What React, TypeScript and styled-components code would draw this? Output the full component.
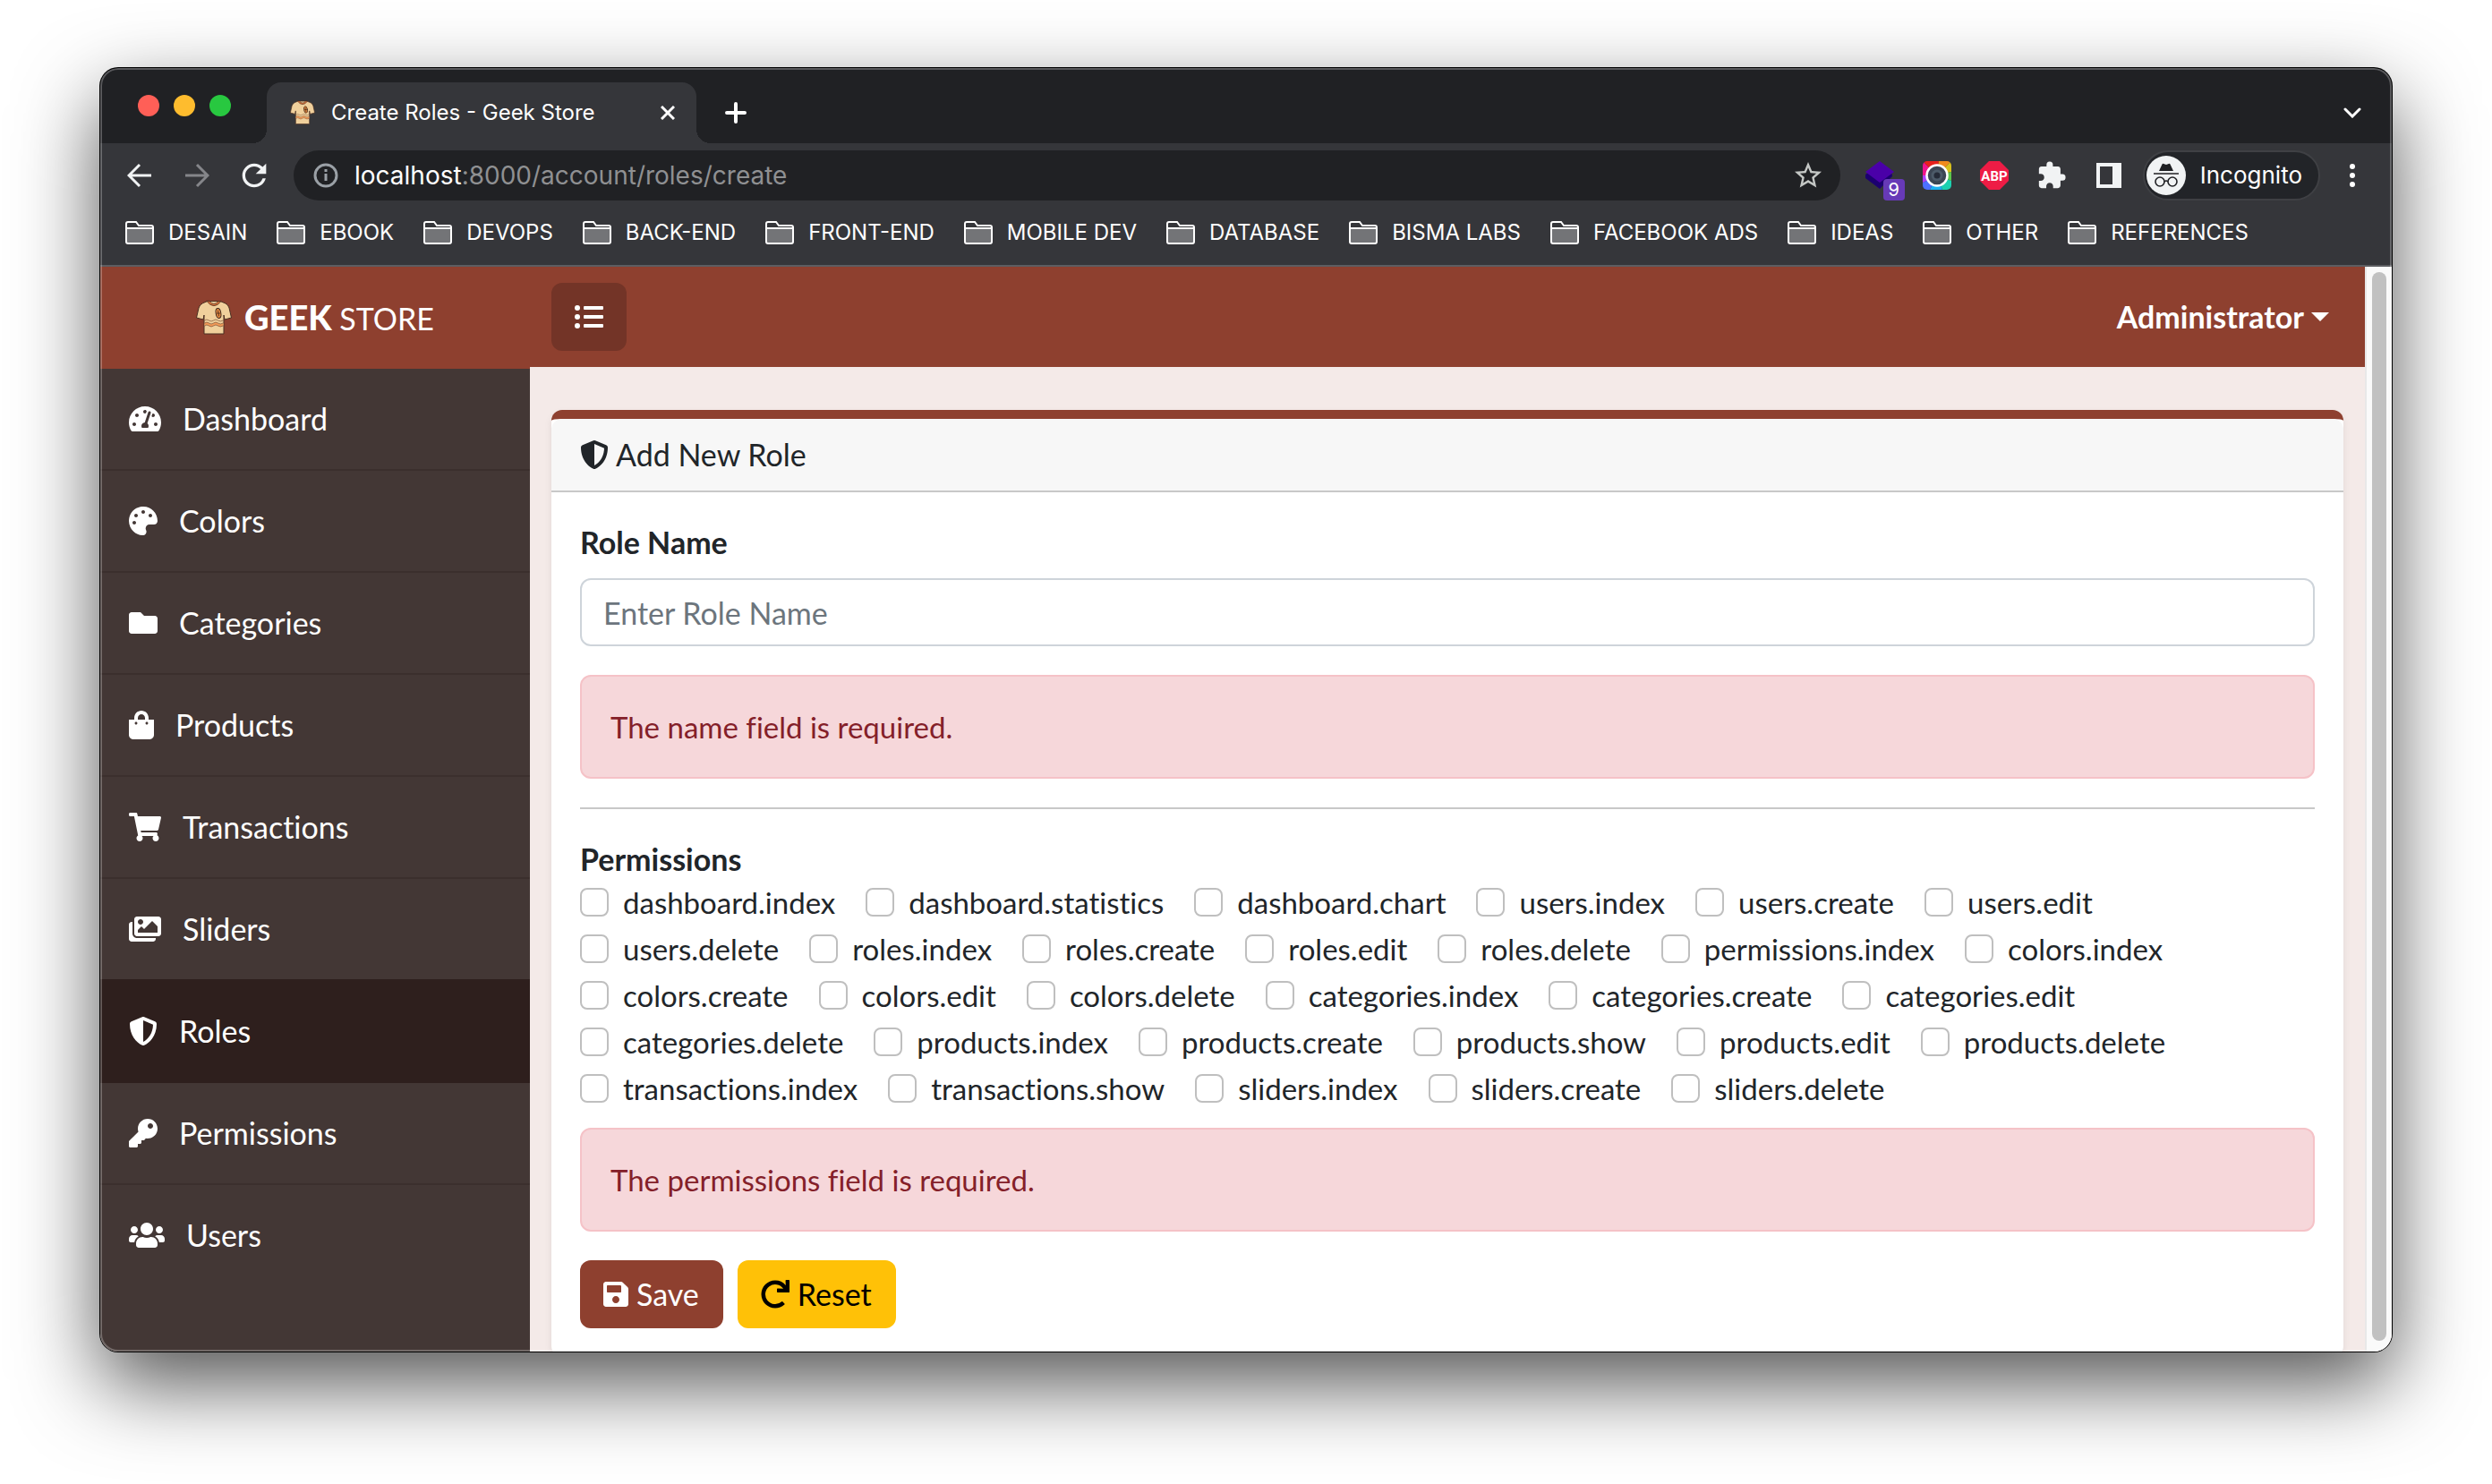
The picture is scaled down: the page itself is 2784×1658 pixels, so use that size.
import React from "react";
import styled, { createGlobalStyle } from "styled-components";
import type { IconType } from "react-icons";
import {
  FaTachometerAlt,
  FaPalette,
  FaFolder,
  FaShoppingBag,
  FaShoppingCart,
  FaImages,
  FaShieldAlt,
  FaKey,
  FaUsers,
  FaSave,
  FaRedo,
  FaListUl,
} from "react-icons/fa";
import { MdExtension, MdStarBorder, MdRefresh } from "react-icons/md";

const uiFont = `Inter, "Liberation Sans", sans-serif`;
const appFont = `Lato, "Open Sans", sans-serif`;
const primary = "#8e402f";

const GlobalStyle = createGlobalStyle`
  *, *::before, *::after { box-sizing: border-box; }
  body { margin: 0; background: #fff; }
  button, input { font: inherit; color: inherit; }
  button { border: 0; padding: 0; background: none; cursor: pointer; }
  a { color: inherit; text-decoration: none; }
  svg { display: block; flex: none; }
`;

/* ---------- Browser window ---------- */

const Desktop = styled.div`
  height: 100vh;
  padding: 76px 112px 148px;
  display: flex;
`;

const Window = styled.div`
  position: relative;
  flex: 1;
  min-width: 0;
  display: flex;
  flex-direction: column;
  overflow: hidden;
  border-radius: 20px;
  background: #202124;
  color: #fff;
  font-family: ${uiFont};
  box-shadow: 0 0 0 1px #000, 0 36px 92px rgba(0, 0, 0, 0.68);

  &::after {
    content: "";
    position: absolute;
    inset: 0;
    border-radius: 20px;
    box-shadow: inset 0 0 0 2px rgba(255, 255, 255, 0.25);
    pointer-events: none;
  }
`;

const TabStrip = styled.div`
  display: flex;
  align-items: flex-end;
  height: 84px;
  padding: 0 24px 0 42px;
`;

const Lights = styled.div`
  display: flex;
  gap: 16px;
  margin-right: 40px;
  align-self: center;
`;

const Light = styled.span<{ $color: string }>`
  width: 24px;
  height: 24px;
  border-radius: 50%;
  background: ${(p) => p.$color};
`;

const Tab = styled.div`
  position: relative;
  display: flex;
  align-items: center;
  gap: 18px;
  width: 480px;
  height: 68px;
  padding: 0 24px 0 26px;
  border-radius: 16px 16px 0 0;
  background: #35363a;
  font-size: 24px;
  line-height: 32px;

  &::before,
  &::after {
    content: "";
    position: absolute;
    bottom: 0;
    width: 16px;
    height: 16px;
  }
  &::before {
    right: 100%;
    background: radial-gradient(circle at 0 0, transparent 16px, #35363a 16px);
  }
  &::after {
    left: 100%;
    background: radial-gradient(circle at 100% 0, transparent 16px, #35363a 16px);
  }
`;

const TabTitle = styled.span`
  flex: 1;
  white-space: nowrap;
`;

const StripButton = styled.button<{ $push?: boolean }>`
  display: grid;
  place-items: center;
  width: 40px;
  height: 68px;
  margin-left: ${(p) => (p.$push ? "auto" : "24px")};
`;

const Toolbar = styled.div`
  display: flex;
  align-items: center;
  height: 72px;
  padding: 0 24px;
  background: #35363a;
`;

const ToolGroup = styled.div`
  display: flex;
  gap: 24px;
`;

const ToolButton = styled.button`
  position: relative;
  display: grid;
  place-items: center;
  width: 40px;
  height: 40px;
  color: #f1f3f4;

  &:disabled {
    color: #85868a;
  }
`;

const Omnibox = styled.div`
  flex: 1;
  display: flex;
  align-items: center;
  gap: 18px;
  height: 56px;
  margin: 0 24px;
  padding: 0 16px 0 22px;
  border-radius: 28px;
  background: #202124;
  color: #9aa0a6;
  font-size: 28px;
  line-height: 40px;
`;

const Url = styled.span`
  flex: 1;
  white-space: nowrap;
  color: #8f9092;

  b {
    font-weight: 400;
    color: #fff;
  }
`;

const Badge = styled.span`
  position: absolute;
  right: -8px;
  bottom: -8px;
  width: 24px;
  height: 24px;
  border-radius: 4px;
  background: #673ab7;
  color: #fff;
  font-size: 20px;
  line-height: 24px;
  text-align: center;
`;

const Pill = styled.button`
  display: flex;
  align-items: center;
  gap: 16px;
  height: 56px;
  margin: 0 16px 0 18px;
  padding: 0 18px 0 2px;
  border: 2px solid #3f4044;
  border-radius: 28px;
  background: #222428;
  font-size: 26px;
  line-height: 32px;
`;

const Bookmarks = styled.nav`
  display: flex;
  gap: 33px;
  padding: 8px 28px 16px;
  border-bottom: 2px solid #5c5d61;
  background: #35363a;
  font-size: 24px;
  line-height: 40px;
`;

const Bookmark = styled.a`
  display: flex;
  align-items: center;
  gap: 16px;
  white-space: nowrap;
`;

/* ---------- Page ---------- */

const Viewport = styled.div`
  flex: 1;
  min-height: 0;
  display: flex;
  background: #f4eae8;
  color: #212529;
  font-family: ${appFont};
  font-size: 34px;
  font-variant-ligatures: none;
  line-height: 48px;
`;

const Sidebar = styled.aside`
  flex: none;
  width: 480px;
  background: #433735;
  color: #fff;
`;

const Brand = styled.a`
  display: flex;
  align-items: center;
  justify-content: center;
  gap: 14px;
  height: 114px;
  background: ${primary};

  b {
    font-size: 38px;
    font-weight: 900;
  }
`;

const MenuItem = styled.a<{ $active?: boolean }>`
  display: flex;
  align-items: center;
  gap: 24px;
  padding: 32px;
  border-bottom: 2px solid ${(p) => (p.$active ? "#2e1f1d" : "#3b2f2d")};
  background: ${(p) => (p.$active ? "#2e1f1d" : "transparent")};
  box-shadow: ${(p) => (p.$active ? "0 -2px 0 #2e1f1d" : "none")};

  &:last-child {
    border-bottom-color: transparent;
  }
`;

const Glyph = styled.span<{ $width?: number }>`
  flex: none;
  svg {
    width: ${(p) => p.$width ?? 32}px;
    height: 32px;
  }
`;

const Content = styled.div`
  flex: 1;
  min-width: 0;
  overflow: hidden;
`;

const Header = styled.header`
  display: flex;
  align-items: center;
  justify-content: space-between;
  height: 112px;
  padding: 0 40px 0 24px;
  background: ${primary};
  color: #fff;
`;

const ToggleButton = styled.button`
  display: grid;
  place-items: center;
  width: 84px;
  height: 76px;
  border-radius: 12px;
  background: #733427;
`;

const UserMenu = styled.button`
  display: flex;
  align-items: center;
  gap: 8px;
  font-weight: 700;

  &::after {
    content: "";
    border: 10px solid transparent;
    border-top-color: #fff;
    border-bottom: 0;
  }
`;

const Main = styled.main`
  padding: 48px 24px 32px;
`;

const Card = styled.form`
  border-top: 10px solid ${primary};
  border-radius: 12px;
  background: #fff;
  box-shadow: 0 4px 8px rgba(0, 0, 0, 0.08);
`;

const CardHeader = styled.div`
  display: flex;
  align-items: center;
  gap: 8px;
  padding: 16px 32px;
  border-bottom: 2px solid #c8c8c8;
  border-radius: 12px 12px 0 0;
  background: #f7f7f7;
`;

const CardBody = styled.div`
  padding: 32px;
`;

const Label = styled.label`
  display: block;
  margin-bottom: 16px;
  font-weight: 700;
`;

const TextInput = styled.input`
  display: block;
  width: 100%;
  height: 76px;
  margin-bottom: 32px;
  padding: 12px 24px;
  border: 2px solid #ced4da;
  border-radius: 12px;
  background: #fff;

  &::placeholder {
    color: #6c757d;
    opacity: 1;
  }
`;

const Alert = styled.div`
  margin-bottom: 32px;
  padding: 32px;
  border: 2px solid #f5c2c7;
  border-radius: 12px;
  background: #f6d7da;
  color: #842029;
  font-size: 33px;
`;

const Divider = styled.hr`
  height: 2px;
  margin: 0 0 32px;
  border: 0;
  background: #c8c8c8;
`;

const Permissions = styled.fieldset`
  display: flex;
  flex-wrap: wrap;
  gap: 4px 34px;
  margin: 0 0 20px;
  padding: 0;
  border: 0;

  legend {
    padding: 0;
    font-weight: 700;
  }
`;

const Check = styled.label`
  display: flex;
  align-items: center;
  gap: 16px;
  font-size: 33px;

  input {
    appearance: none;
    width: 32px;
    height: 32px;
    margin: 0;
    border: 2px solid #bfbfbf;
    border-radius: 8px;
    background: #fff;
  }
`;

const Actions = styled.div`
  display: flex;
  gap: 16px;
`;

const ActionButton = styled.button<{ $tone: "primary" | "warning" }>`
  display: flex;
  align-items: center;
  gap: 9px;
  padding: 14px 27px 14px 26px;
  border-radius: 12px;
  background: ${(p) => (p.$tone === "primary" ? primary : "#ffc107")};
  color: ${(p) => (p.$tone === "primary" ? "#fff" : "#000")};
`;

const ScrollTrack = styled.div`
  flex: none;
  display: flex;
  width: 30px;
  padding: 6px 6px 12px;
  border-left: 2px solid #e8e8e8;
  background: #fafafa;
`;

const ScrollThumb = styled.div`
  flex: 1;
  border-radius: 8px;
  background: #c1c1c1;
`;

/* ---------- Drawings ---------- */

const Shirt = ({ size }: { size: number }) => (
  <svg width={size} height={size} viewBox="0 0 40 40" strokeLinejoin="round" strokeLinecap="round">
    <path
      d="M13 1.500H27L33 4Q36 5.500 37 9L39.500 20 32 22 31 17V38H9V17L8 22 .5 20 3 9Q4 5.500 7 4Z"
      fill="#f0d09c"
      stroke="#4a2f22"
      strokeWidth="1"
    />
    <path d="M12 1.500Q20 12 28 1.500H25Q20 7.500 15 1.500Z" fill="#d9743a" stroke="#4a2f22" strokeWidth="0.8" />
    <path d="M9.500 26q2.500-2 5 0t5 0 5 0 6 0v3q-3.500 2-6 0t-5 0-5 0-5 0z" fill="#f29a58" />
    <path
      d="M9.500 23q2.500-2 5 0t5 0 5 0 6 0M9.500 26q2.500-2 5 0t5 0 5 0 6 0M9.500 29q2.500-2 5 0t5 0 5 0 6 0"
      fill="none"
      stroke="#7a5238"
      strokeWidth="0.7"
    />
    <ellipse cx="25" cy="15" rx="2.800" ry="5.500" transform="rotate(-10 25 15)" fill="#e98b40" stroke="#3a241a" strokeWidth="1" />
    <path d="M24.500 12l1 6M23.500 15h3" stroke="#3a241a" strokeWidth="0.8" />
  </svg>
);

const FolderOutline = () => (
  <svg width="32" height="28" viewBox="0 0 32 28" fill="none" stroke="#fff" strokeWidth="2">
    <path d="M1 9h30v15q0 2-2 2H3q-2 0-2-2z" fill="#737477" />
    <path d="M1 9V4q0-2 2-2h9l3 4h14q2 0 2 2v1" />
  </svg>
);

const ArrowIcon = ({ flip }: { flip?: boolean }) => (
  <svg width="28" height="28" viewBox="0 0 28 28" fill="none" stroke="currentColor" strokeWidth="3">
    <path d={flip ? "M1 14h24M14 2l12 12-12 12" : "M27 14H3M14 2 2 14l12 12"} />
  </svg>
);

const CloseIcon = () => (
  <svg width="16" height="16" viewBox="0 0 16 16" stroke="#fff" strokeWidth="3">
    <path d="M1 1l14 14M15 1 1 15" />
  </svg>
);

const PlusIcon = () => (
  <svg width="24" height="24" viewBox="0 0 24 24" stroke="#fff" strokeWidth="4" strokeLinecap="round">
    <path d="M12 2v20M2 12h20" />
  </svg>
);

const ChevronIcon = () => (
  <svg width="20" height="12" viewBox="0 0 20 12" fill="none" stroke="#fff" strokeWidth="3" strokeLinecap="round">
    <path d="M2 2l8 8 8-8" />
  </svg>
);

const InfoIcon = () => (
  <svg width="28" height="28" viewBox="0 0 28 28" fill="none" stroke="#9aa0a6" strokeWidth="3">
    <circle cx="14" cy="14" r="12" />
    <path d="M14 12v8M14 7v3" />
  </svg>
);

const LayersIcon = () => (
  <svg width="40" height="40" viewBox="0 0 40 40">
    <path d="M4 19 20 8 34 19V21L20 35 4 23z" fill="#1c0070" />
    <path d="M4 16 20 4 36 16 20 28z" fill="#4a00a8" />
  </svg>
);

const LensIcon = () => (
  <svg width="32" height="32" viewBox="0 0 32 32">
    <defs>
      <clipPath id="lens">
        <rect width="32" height="32" rx="5" />
      </clipPath>
    </defs>
    <g clipPath="url(#lens)">
      <path d="M16 16 0 0V18z" fill="#f0148c" />
      <path d="M16 16 0 0H18z" fill="#e8201c" />
      <path d="M16 16 18 0H32z" fill="#f08a1c" />
      <path d="M16 16 32 0V12z" fill="#d8c01c" />
      <path d="M16 16 32 12V22z" fill="#5cc84c" />
      <path d="M16 16 32 22V32H22z" fill="#1cd0b0" />
      <path d="M16 16 22 32H8z" fill="#1cb0f0" />
      <path d="M16 16 8 32H0V24z" fill="#4c70ff" />
      <path d="M16 16 0 24V16z" fill="#b040ff" />
    </g>
    <circle cx="16" cy="16" r="11.500" fill="#3c4654" stroke="#fff" strokeWidth="2.500" />
    <circle cx="16" cy="16" r="6.500" fill="#4c5a68" />
    <circle cx="16" cy="16" r="3.500" fill="#252b38" />
  </svg>
);

const AbpIcon = () => (
  <svg width="32" height="32" viewBox="0 0 32 32">
    <path d="M10 0h12l10 10v12L22 32H10L0 22V10z" fill="#ee1c45" />
    <text x="16" y="22" textAnchor="middle" fill="#fff" fontFamily="Roboto, sans-serif" fontWeight="700" fontSize="15">
      ABP
    </text>
  </svg>
);

const PanelIcon = () => (
  <svg width="28" height="28" viewBox="0 0 28 28">
    <path d="M0 0h28v28H0zM4 4v20h14V4z" fill="#f1f3f4" fillRule="evenodd" />
  </svg>
);

const KebabIcon = () => (
  <svg width="8" height="28" viewBox="0 0 8 28" fill="#fff">
    <circle cx="4" cy="4" r="3" />
    <circle cx="4" cy="14" r="3" />
    <circle cx="4" cy="24" r="3" />
  </svg>
);

const IncognitoIcon = () => (
  <svg width="44" height="44" viewBox="0 0 44 44">
    <circle cx="22" cy="22" r="22" fill="#f1f3f4" />
    <path d="M14 17 17.500 9.500q.5-1 1.600-.6L22 10l2.900-1.100q1.100-.4 1.600.6L30 17z" fill="#202124" />
    <g fill="none" stroke="#202124" strokeWidth="1.600">
      <path d="M8 20h28" />
      <circle cx="15" cy="29" r="5" />
      <circle cx="29" cy="29" r="5" />
      <path d="M20 29q2-2 4 0" />
    </g>
  </svg>
);

/* ---------- Data ---------- */

const bookmarks = [
  "DESAIN",
  "EBOOK",
  "DEVOPS",
  "BACK-END",
  "FRONT-END",
  "MOBILE DEV",
  "DATABASE",
  "BISMA LABS",
  "FACEBOOK ADS",
  "IDEAS",
  "OTHER",
  "REFERENCES",
];

const menu: { label: string; icon: IconType; width?: number; active?: boolean }[] = [
  { label: "Dashboard", icon: FaTachometerAlt, width: 36 },
  { label: "Colors", icon: FaPalette },
  { label: "Categories", icon: FaFolder },
  { label: "Products", icon: FaShoppingBag, width: 28 },
  { label: "Transactions", icon: FaShoppingCart, width: 36 },
  { label: "Sliders", icon: FaImages, width: 36 },
  { label: "Roles", icon: FaShieldAlt, active: true },
  { label: "Permissions", icon: FaKey },
  { label: "Users", icon: FaUsers, width: 40 },
];

const permissions = [
  "dashboard.index",
  "dashboard.statistics",
  "dashboard.chart",
  "users.index",
  "users.create",
  "users.edit",
  "users.delete",
  "roles.index",
  "roles.create",
  "roles.edit",
  "roles.delete",
  "permissions.index",
  "colors.index",
  "colors.create",
  "colors.edit",
  "colors.delete",
  "categories.index",
  "categories.create",
  "categories.edit",
  "categories.delete",
  "products.index",
  "products.create",
  "products.show",
  "products.edit",
  "products.delete",
  "transactions.index",
  "transactions.show",
  "sliders.index",
  "sliders.create",
  "sliders.delete",
];

export default function App() {
  return (
    <>
      <GlobalStyle />
      <Desktop>
        <Window>
          <TabStrip>
            <Lights>
              <Light $color="#ff5f57" />
              <Light $color="#febc2e" />
              <Light $color="#28c840" />
            </Lights>
            <Tab>
              <Shirt size={28} />
              <TabTitle>Create Roles - Geek Store</TabTitle>
              <button type="button" aria-label="Close tab">
                <CloseIcon />
              </button>
            </Tab>
            <StripButton type="button" aria-label="New tab">
              <PlusIcon />
            </StripButton>
            <StripButton type="button" aria-label="Search tabs" $push>
              <ChevronIcon />
            </StripButton>
          </TabStrip>

          <Toolbar>
            <ToolGroup>
              <ToolButton type="button" aria-label="Back">
                <ArrowIcon />
              </ToolButton>
              <ToolButton type="button" aria-label="Forward" disabled>
                <ArrowIcon flip />
              </ToolButton>
              <ToolButton type="button" aria-label="Reload">
                <MdRefresh size={40} />
              </ToolButton>
            </ToolGroup>
            <Omnibox>
              <InfoIcon />
              <Url>
                <b>localhost</b>:8000/account/roles/create
              </Url>
              <ToolButton type="button" aria-label="Bookmark this page">
                <MdStarBorder size={36} color="#c4c7c5" />
              </ToolButton>
            </Omnibox>
            <ToolGroup>
              <ToolButton type="button" aria-label="Layers">
                <LayersIcon />
                <Badge>9</Badge>
              </ToolButton>
              <ToolButton type="button" aria-label="Camera">
                <LensIcon />
              </ToolButton>
              <ToolButton type="button" aria-label="Adblock Plus">
                <AbpIcon />
              </ToolButton>
              <ToolButton type="button" aria-label="Extensions">
                <MdExtension size={34} />
              </ToolButton>
              <ToolButton type="button" aria-label="Side panel">
                <PanelIcon />
              </ToolButton>
            </ToolGroup>
            <Pill type="button">
              <IncognitoIcon />
              Incognito
            </Pill>
            <ToolButton type="button" aria-label="Menu">
              <KebabIcon />
            </ToolButton>
          </Toolbar>

          <Bookmarks>
            {bookmarks.map((name) => (
              <Bookmark href="#" key={name}>
                <FolderOutline />
                {name}
              </Bookmark>
            ))}
          </Bookmarks>

          <Viewport>
            <Sidebar>
              <Brand href="#">
                <Shirt size={40} />
                <span>
                  <b>GEEK</b> STORE
                </span>
              </Brand>
              <nav>
                {menu.map(({ label, icon: Icon, width, active }) => (
                  <MenuItem href="#" key={label} $active={active}>
                    <Glyph $width={width}>
                      <Icon />
                    </Glyph>
                    {label}
                  </MenuItem>
                ))}
              </nav>
            </Sidebar>

            <Content>
              <Header>
                <ToggleButton type="button" aria-label="Toggle menu">
                  <Glyph>
                    <FaListUl />
                  </Glyph>
                </ToggleButton>
                <UserMenu type="button">Administrator</UserMenu>
              </Header>
              <Main>
                <Card>
                  <CardHeader>
                    <Glyph>
                      <FaShieldAlt />
                    </Glyph>
                    Add New Role
                  </CardHeader>
                  <CardBody>
                    <Label htmlFor="role-name">Role Name</Label>
                    <TextInput id="role-name" type="text" placeholder="Enter Role Name" />
                    <Alert role="alert">The name field is required.</Alert>
                    <Divider />
                    <Permissions>
                      <legend>Permissions</legend>
                      {permissions.map((name) => (
                        <Check key={name}>
                          <input type="checkbox" name="permissions" value={name} />
                          {name}
                        </Check>
                      ))}
                    </Permissions>
                    <Alert role="alert">The permissions field is required.</Alert>
                    <Actions>
                      <ActionButton type="button" $tone="primary">
                        <Glyph $width={28}>
                          <FaSave />
                        </Glyph>
                        Save
                      </ActionButton>
                      <ActionButton type="reset" $tone="warning">
                        <Glyph>
                          <FaRedo />
                        </Glyph>
                        Reset
                      </ActionButton>
                    </Actions>
                  </CardBody>
                </Card>
              </Main>
            </Content>

            <ScrollTrack>
              <ScrollThumb />
            </ScrollTrack>
          </Viewport>
        </Window>
      </Desktop>
    </>
  );
}
